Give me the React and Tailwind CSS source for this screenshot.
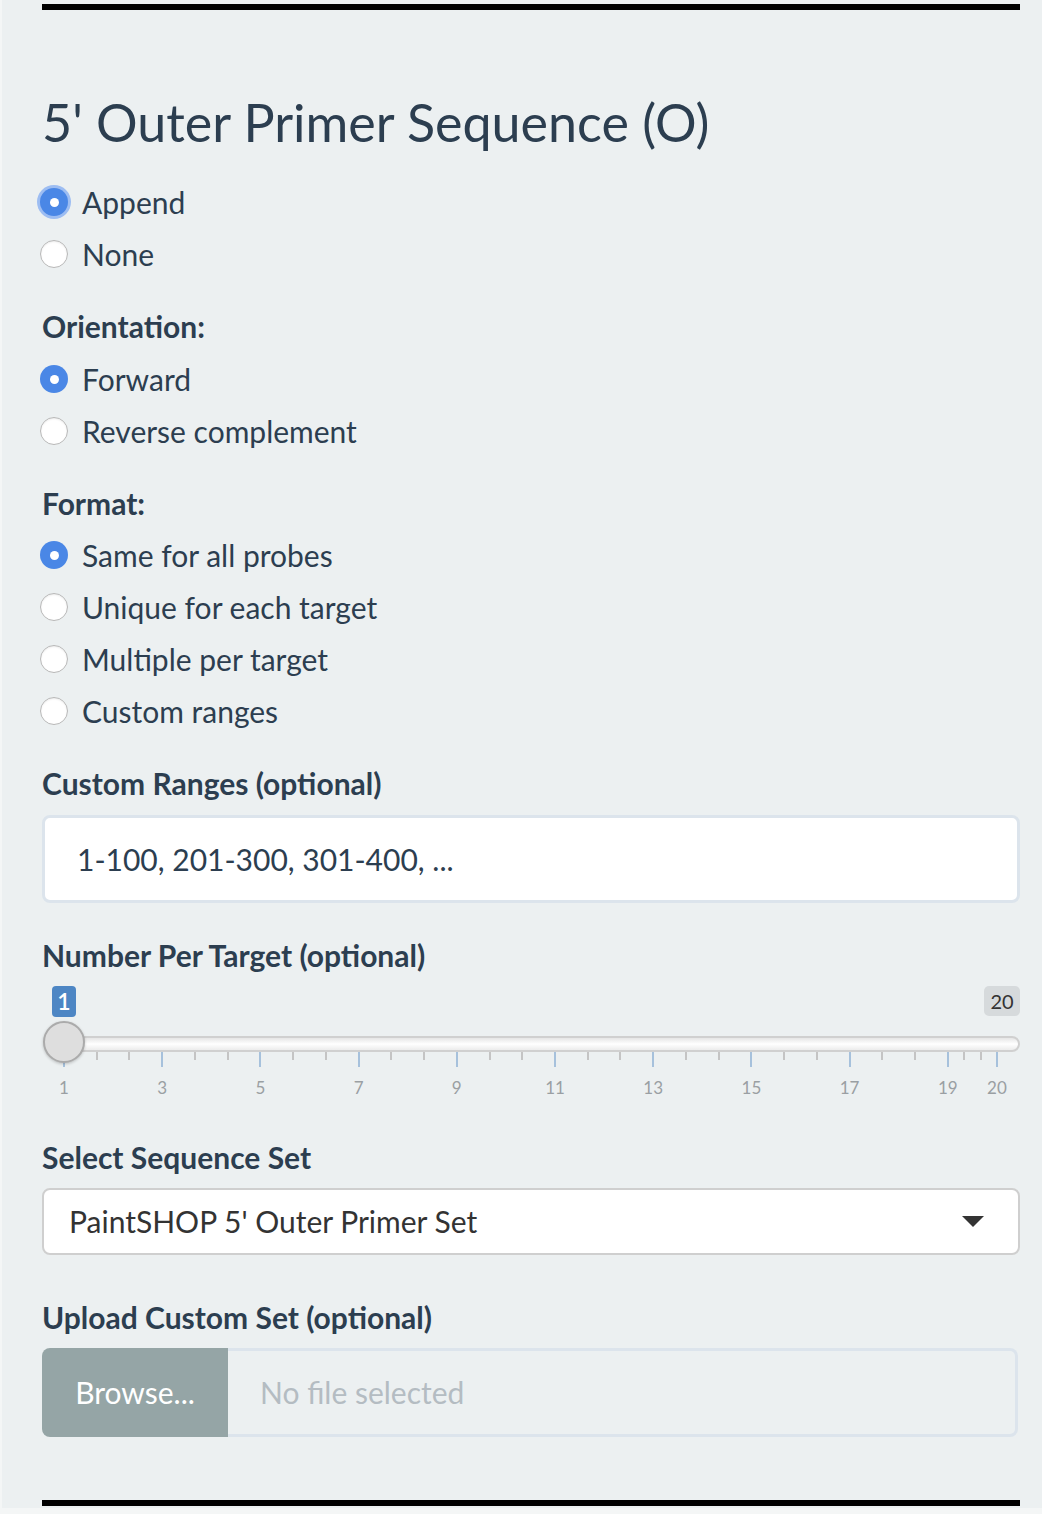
import { useState } from 'react';

const font = { fontFamily: 'Lato, "Open Sans", sans-serif' };

function Radio({ label, checked, focused, onChange }) {
  return (
    <label className="flex h-[52px] items-center cursor-pointer" onClick={onChange}>
      <span
        className={
          checked
            ? 'ml-[-2px] flex h-[28px] w-[28px] items-center justify-center rounded-full bg-[#4a87e6]' +
              (focused ? ' ring-[3px] ring-[#9dbdf2]' : '')
            : 'ml-[-2px] h-[28px] w-[28px] rounded-full border-[1.5px] border-[#b8b8b8] bg-white shadow-[inset_0_1px_2px_rgba(0,0,0,0.08)]'
        }
      >
        {checked && <span className="h-[9px] w-[9px] rounded-full bg-white" />}
      </span>
      <span className="ml-[14px] text-[30px] leading-[42px] text-[#2c3e50]">{label}</span>
    </label>
  );
}

function RadioGroup({ options, value, onChange, focused }) {
  return (
    <div className="flex flex-col">
      {options.map((opt) => (
        <Radio
          key={opt}
          label={opt}
          checked={value === opt}
          focused={focused && value === opt}
          onChange={() => onChange(opt)}
        />
      ))}
    </div>
  );
}

function Label({ children, className = '' }) {
  return (
    <div className={'h-[42px] text-[30px] font-bold leading-[42px] text-[#2c3e50] ' + className}>{children}</div>
  );
}

// slider geometry (relative to slider block left edge at x=42)
const START = 22;
const STEP = 49.1;
const xOf = (v) => START + (v - 1) * STEP;

function Slider() {
  const majors = [1, 3, 5, 7, 9, 11, 13, 15, 17, 19, 20];
  const minors = [];
  for (let i = 0; i < majors.length - 1; i++) {
    const a = majors[i];
    const b = majors[i + 1];
    minors.push(a + (b - a) / 3, a + (2 * (b - a)) / 3);
  }

  return (
    <div className="relative h-[160px]">
      <div className="absolute left-[10px] top-[10px] flex h-[31px] w-[24px] items-center justify-center rounded-[4px] bg-[#4d86c4] text-[23px] font-semibold text-white">
        1
      </div>
      <div className="absolute left-[942px] top-[10px] flex h-[30px] w-[36px] items-center justify-center rounded-[5px] bg-[#d6dadc] text-[20px] text-[#333]">
        20
      </div>

      <div className="absolute left-[3px] top-[60px] h-[16px] w-[975px] rounded-full border-2 border-[#d0d0d0] bg-gradient-to-b from-[#e6e6e6] via-white to-[#ececec]" />

      {minors.map((v) => (
        <div
          key={'m' + v}
          className="absolute top-[76px] h-[8px] w-[2px] bg-[#c4c4c4]"
          style={{ left: xOf(v) - 1 }}
        />
      ))}
      {majors.map((v) => (
        <div
          key={'M' + v}
          className="absolute top-[76px] h-[15px] w-[2px] bg-[#a6c1dc]"
          style={{ left: xOf(v) - 1 }}
        />
      ))}
      {majors.map((v) => (
        <div
          key={'l' + v}
          className="absolute top-[102px] w-[40px] text-center text-[17px] leading-[20px] text-[#9a9fa3]"
          style={{ left: xOf(v) - 20 }}
        >
          {v}
        </div>
      ))}

      <div className="absolute left-[1px] top-[45px] h-[42px] w-[42px] rounded-full border-2 border-[#ababab] bg-[#dedede] shadow-[0_1px_3px_rgba(0,0,0,0.2)]" />
    </div>
  );
}

export default function App() {
  const [append, setAppend] = useState('Append');
  const [orientation, setOrientation] = useState('Forward');
  const [format, setFormat] = useState('Same for all probes');
  const [ranges, setRanges] = useState('1-100, 201-300, 301-400, ...');

  return (
    <div className="h-[1514px] w-[1042px] bg-[#f4f6f6] pl-[2px]" style={font}>
      <div className="h-[1508px] bg-[#ecf0f1] pl-[40px] pr-[22px] pt-[4px]">
        <div className="h-[6px] bg-black" />

        <h3 className="mt-[83px] h-[58px] text-[52px] leading-[58px] text-[#2c3e50]">5' Outer Primer Sequence (O)</h3>

        <div className="mt-[25px]">
          <RadioGroup options={['Append', 'None']} value={append} onChange={setAppend} focused />
        </div>

        <Label className="mt-[25px]">Orientation:</Label>
        <div className="mt-[6px]">
          <RadioGroup options={['Forward', 'Reverse complement']} value={orientation} onChange={setOrientation} />
        </div>

        <Label className="mt-[25px]">Format:</Label>
        <div className="mt-[5px]">
          <RadioGroup
            options={['Same for all probes', 'Unique for each target', 'Multiple per target', 'Custom ranges']}
            value={format}
            onChange={setFormat}
          />
        </div>

        <Label className="mt-[25px]">Custom Ranges (optional)</Label>
        <input
          type="text"
          value={ranges}
          onChange={(e) => setRanges(e.target.value)}
          className="mt-[11px] block h-[88px] w-full rounded-[8px] border-[3px] border-[#dce4ec] bg-white pl-[32px] text-[30px] text-[#2c3e50] outline-none"
        />

        <Label className="mt-[31px]">Number Per Target (optional)</Label>
        <Slider />

        <Label>Select Sequence Set</Label>
        <div className="mt-[10px] flex h-[67px] items-center justify-between rounded-[8px] border-2 border-[#cfcfcf] bg-white pl-[25px] pr-[34px]">
          <span className="text-[30px] text-[#333]">PaintSHOP 5' Outer Primer Set</span>
          <svg width="22" height="11" viewBox="0 0 22 11">
            <path d="M0 0 L22 0 L11 11 Z" fill="#333" />
          </svg>
        </div>

        <Label className="mt-[41px]">Upload Custom Set (optional)</Label>
        <div className="mt-[10px] flex h-[89px]">
          <button
            type="button"
            className="w-[186px] rounded-l-[8px] bg-[#95a5a6] text-[30px] text-white"
          >
            Browse...
          </button>
          <div className="flex flex-1 items-center rounded-r-[8px] border-[3px] border-l-0 border-[#dce4ec] bg-[#ecf0f1] pl-[32px] text-[30px] text-[#b4bcc2] mr-[2px]">
            No file selected
          </div>
        </div>

        <div className="mt-[63px] h-[6px] bg-black" />
      </div>
    </div>
  );
}
